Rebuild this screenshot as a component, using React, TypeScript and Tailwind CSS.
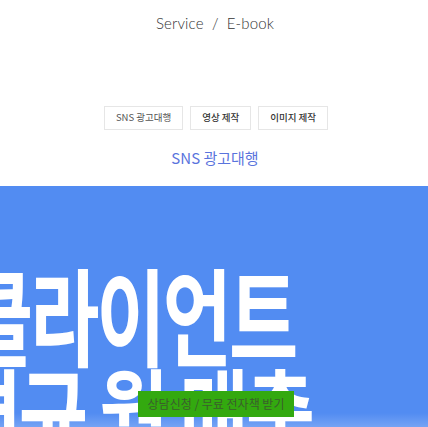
const tabs = ['SNS 광고대행', '영상 제작', '이미지 제작'];

export default function App() {
  return (
    <div
      className="relative h-[427px] w-full overflow-hidden bg-white"
      style={{ fontFamily: '"Noto Sans CJK KR", "Noto Sans", sans-serif' }}
    >
      <header className="flex h-[47px] items-center justify-center">
        <h1
          className="pl-[2px] text-[15px] font-light tracking-[0.01em] text-[#333]"
          style={{ fontFamily: 'Lato, "Noto Sans", sans-serif' }}
        >
          Service <span className="mx-[4px]">/</span> E-book
        </h1>
      </header>

      <nav className="mt-[59px] flex justify-center gap-[7px] pl-[4px]">
        {tabs.map((tab, i) => (
          <button
            key={tab}
            type="button"
            className={
              'h-[24px] border border-[#e6e6e6] bg-white px-[11px] text-[9.5px] leading-none ' +
              (i === 0 ? 'font-normal text-[#555]' : 'font-medium text-[#333]')
            }
          >
            {tab}
          </button>
        ))}
      </nav>

      <h2 className="mt-[16px] pl-[2px] text-center text-[15px] font-normal leading-[24px] text-[#5a74dd]">
        SNS 광고대행
      </h2>

      <section className="relative mt-[16px] h-[241px] overflow-hidden bg-[#528cf2]">
        <div className="absolute bottom-0 left-0 right-0 h-[14px] bg-gradient-to-b from-transparent to-white/20" />
        <div className="ml-[-36px] mt-[76px] origin-left scale-x-[0.71] whitespace-nowrap text-[106px] font-bold leading-[100px] tracking-[-0.04em] text-white">
          <p>클라이언트</p>
          <p className="ml-[-16px]">평균 월 매출</p>
        </div>
      </section>

      <a
        href="#"
        className="absolute left-[138px] top-[391px] flex h-[26px] w-[156px] items-center justify-center bg-[#33a90f] text-[12px] text-[#3a5f2c]"
      >
        상담신청 / 무료 전자책 받기
      </a>
    </div>
  );
}
